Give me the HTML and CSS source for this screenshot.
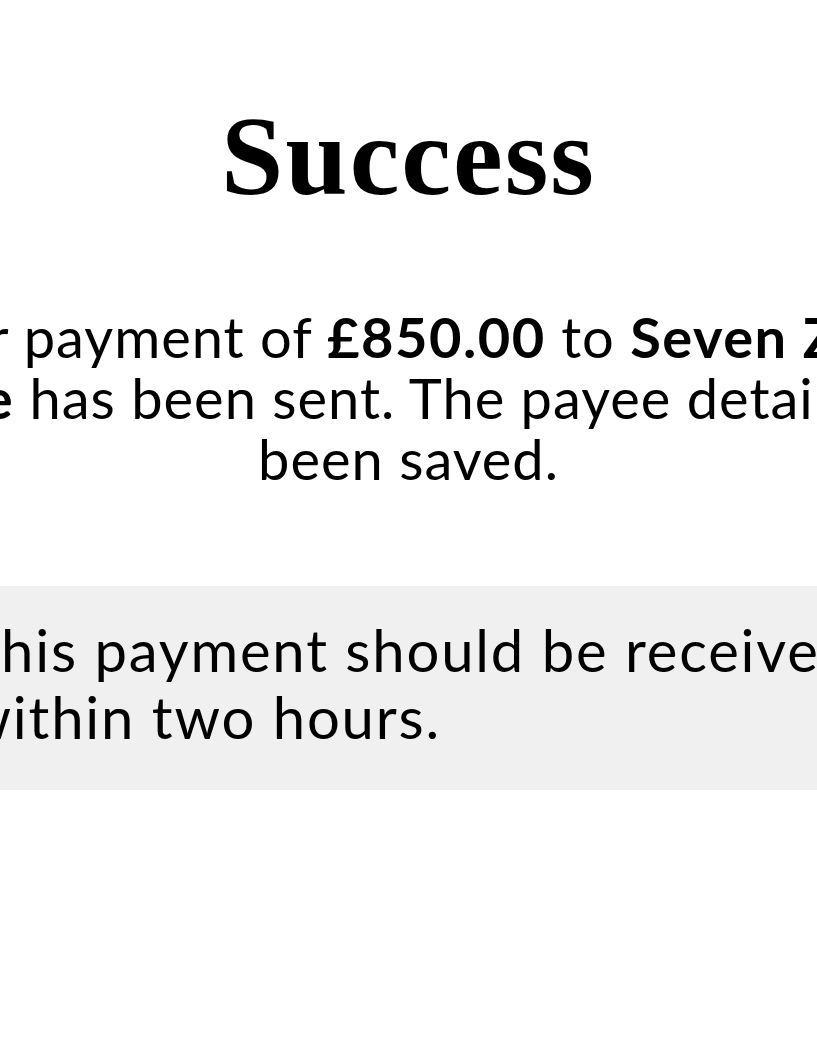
FILE: index.html
```html
<!DOCTYPE html>
<html lang="en">
<head>
<meta charset="utf-8">
<title>Success</title>
<link rel="stylesheet" href="styles.css">
</head>
<body>
<main class="page">
  <div class="content">
    <h1 class="title">Success</h1>
    <p class="message">Your payment of <strong>£850.00</strong> to <strong>Seven Zero Garage</strong> has been sent. The payee details have been saved.</p>
    <div class="notice">
      <p class="notice-text">This payment should be received within two hours.</p>
    </div>
  </div>
</main>
</body>
</html>
```
FILE: styles.css
```css
html, body {
  margin: 0;
  padding: 0;
  background: #ffffff;
  overflow: hidden;
}

.page {
  display: flex;
  justify-content: center;
  width: 817px;
  height: 1057px;
  overflow: hidden;
}

.content {
  flex: 0 0 1190px;
  width: 1190px;
  display: flex;
  flex-direction: column;
  color: #000;
  font-family: Lato, "Liberation Sans", sans-serif;
}

.title {
  margin: 96px 0 0;
  text-align: center;
  font-family: "Liberation Serif", "DejaVu Serif", serif;
  font-weight: 700;
  font-size: 112px;
  line-height: 120px;
  letter-spacing: 2px;
}

.message {
  margin: 90px 0 0;
  text-align: center;
  font-size: 56px;
  line-height: 61px;
  letter-spacing: 1px;
}

.message strong {
  font-weight: 700;
  letter-spacing: 1.5px;
}

.notice {
  margin-top: 97px;
  background: #f0f0f0;
  padding: 30px 120px 40px 152px;
}

.notice-text {
  margin: 0;
  font-size: 58px;
  line-height: 67px;
  letter-spacing: 1.8px;
}
```
